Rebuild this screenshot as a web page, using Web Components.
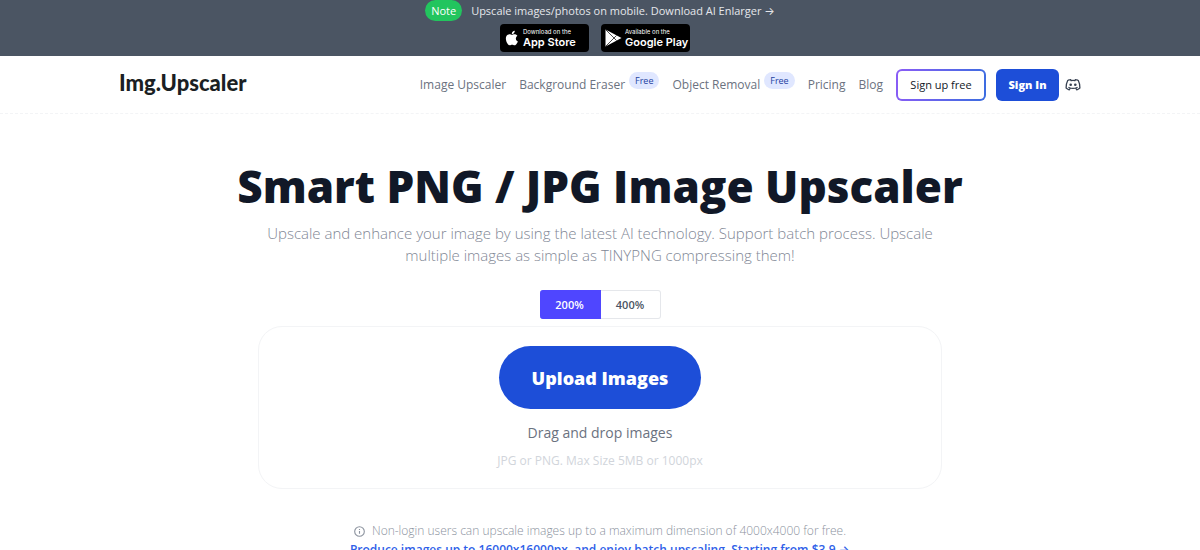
<!DOCTYPE html>
<html lang="en">
<head>
<meta charset="utf-8">
<meta name="viewport" content="width=device-width, initial-scale=1">
<title>Img.Upscaler</title>
<style>
  html { background: #fff; }
  body { margin: 0; font-family: "Open Sans", Inter, "Noto Sans", sans-serif; color: #6b7280; font-size: 12px; line-height: 20px; }
</style>
</head>
<body>
<upscaler-page></upscaler-page>
<script>
function define(name, html) {
  const template = document.createElement('template');
  template.innerHTML = '<style>*{box-sizing:border-box}a{color:inherit;text-decoration:none}button{font:inherit;border:0;margin:0;padding:0;cursor:pointer}</style>' + html;
  customElements.define(name, class extends HTMLElement {
    constructor() {
      super();
      this.attachShadow({ mode: 'open' }).append(template.content.cloneNode(true));
    }
  });
}

define('store-badge', `
<style>
  :host { display: block; }
  a { display: flex; align-items: center; gap: 3px; width: 89px; height: 28px; padding: 0 4px; border-radius: 4px; background: #000; color: #fff; font-family: Inter, sans-serif; white-space: nowrap; }
  .lines { display: flex; flex-direction: column; }
  .small { font-size: 6px; line-height: 8px; }
  .big { font-size: 11px; line-height: 12px; font-weight: 600; }
</style>
<a href="#"><slot name="icon"></slot><span class="lines"><span class="small"><slot name="small"></slot></span><span class="big"><slot></slot></span></span></a>`);

define('promo-bar', `
<style>
  :host { display: flex; flex-direction: column; align-items: center; gap: 3px; height: 56px; background: #4b5563; color: #e5e7eb; }
  .row { display: flex; align-items: center; gap: 9px; font-size: 11px; line-height: 21px; }
  .note { padding: 0 6px; border-radius: 12px; background: #22c55e; color: #fff; }
  .stores { display: flex; gap: 12px; padding-right: 10px; }
  svg { display: block; flex: none; }
</style>
<div class="row"><span class="note">Note</span><a href="#">Upscale images/photos on mobile. Download AI Enlarger →</a></div>
<div class="stores">
  <store-badge>
    <svg slot="icon" width="16" height="18" viewBox="2 0 20 24" fill="#fff"><path d="M17.1 12.7c0-2.5 2-3.7 2.100-3.800-1.200-1.700-3-1.900-3.600-2-1.500-.1-3 .9-3.700.9-.8 0-2-.9-3.200-.9-1.700 0-3.200 1-4.100 2.400-1.700 3-.4 7.500 1.300 10 .8 1.200 1.800 2.500 3.100 2.500 1.300-.1 1.700-.8 3.200-.8s1.900.8 3.200.8c1.300 0 2.200-1.200 3-2.400 1-1.400 1.300-2.700 1.400-2.800-.1 0-2.700-1-2.700-3.900zM14.700 5.400c.7-.8 1.100-1.900 1-3.100-1 .1-2.200.7-2.900 1.500-.6.700-1.200 1.900-1 3 1.100.1 2.200-.6 2.900-1.400z"/></svg>
    <span slot="small">Download on the</span>App Store
  </store-badge>
  <store-badge>
    <svg slot="icon" width="17" height="18" viewBox="0 0 17 18"><path d="M.5.5v17l16-8.500z" fill="#fff"/><path d="M1 1l10.500 10.500M1 17L11.500 6.500" stroke="#000" stroke-width=".7"/></svg>
    <span slot="small">Available on the</span>Google Play
  </store-badge>
</div>`);

define('nav-link', `
<style>
  :host { display: flex; align-items: center; gap: 4px; white-space: nowrap; }
  ::slotted([slot=tag]) { padding: 0 6px; margin-bottom: 8px; border-radius: 9px; background: #e0e7ff; color: #1e429f; font-size: 9px; line-height: 17px; }
</style>
<a href="#"><slot></slot></a><slot name="tag"></slot>`);

define('site-header', `
<style>
  :host { display: block; border-bottom: 1px dashed #f3f4f6; }
  header { display: flex; align-items: center; justify-content: space-between; max-width: 962px; height: 57px; margin: 0 auto; }
  .logo { font: 900 22px/24px Lato, sans-serif; color: #1b1f24; padding-bottom: 4px; }
  nav { display: flex; align-items: center; gap: 13px; }
  .buttons { display: flex; align-items: center; gap: 10px; }
  button { height: 32px; border-radius: 6px; font-size: 11px; white-space: nowrap; }
  .up { width: 90px; border: 2px solid transparent; background: linear-gradient(#fff, #fff) padding-box, linear-gradient(100deg, #8b5cf6, #3b6de0) border-box; color: #111827; font-weight: 500; }
  .in { width: 63px; background: #1d4ed8; color: #fff; font-weight: 800; }
  .discord { margin-left: -4px; }
  svg { display: block; }
</style>
<header>
  <a class="logo" href="#">Img.Upscaler</a>
  <nav>
    <nav-link>Image Upscaler</nav-link>
    <nav-link>Background Eraser<span slot="tag">Free</span></nav-link>
    <nav-link>Object Removal<span slot="tag">Free</span></nav-link>
    <nav-link>Pricing</nav-link>
    <nav-link>Blog</nav-link>
    <div class="buttons"><button class="up">Sign up free</button><button class="in">Sign In</button>
    <a class="discord" href="#" aria-label="Discord"><svg width="16" height="14" viewBox="0 0 16 14" fill="none" stroke="#374151" stroke-width="1.300" stroke-linecap="round" stroke-linejoin="round"><path d="M5.600 1.600C4.500 1.700 3.500 2 2.700 2.500 1.500 4.800 1 7.200 1.100 10.100c.9.800 1.900 1.300 3.100 1.700l1-1.600M10.400 1.600c1.100.1 2.100.4 2.900.9 1.200 2.300 1.700 4.700 1.600 7.600-.9.800-1.900 1.300-3.100 1.700l-1-1.600M5.600 1.600l.5 1c1.300-.2 2.500-.2 3.800 0l.5-1M3.900 9.500c2.700 1.200 5.500 1.200 8.200 0"/><g fill="#374151" stroke="none"><circle cx="5.700" cy="6.700" r="1.300"/><circle cx="10.300" cy="6.700" r="1.300"/></g></svg></a></div>
  </nav>
</header>`);

define('scale-switch', `
<style>
  :host { display: flex; }
  button { height: 29px; font-size: 11px; font-weight: 600; background: #fff; color: #4b5563; border: 1px solid #e5e7eb; width: 60px; border-left: 0; border-radius: 0 3px 3px 0; }
  .on { width: 61px; background: #4f46ff; color: #fff; border-color: #4f46ff; border-radius: 3px 0 0 3px; }
</style>
<button class="on">200%</button><button>400%</button>`);

define('upload-card', `
<style>
  :host { display: flex; flex-direction: column; align-items: center; width: 100%; max-width: 684px; padding: 19px 0 17px; border: 1px solid #f3f4f6; border-radius: 24px; box-sizing: border-box; }
  button { height: 63px; padding: 0 33px; border-radius: 32px; background: #1d4ed8; color: #fff; font-size: 18px; font-weight: 800; }
  .drop { margin-top: 14px; font-size: 14px; }
  .hint { margin-top: 8px; color: #d1d5db; }
</style>
<button>Upload Images</button>
<div class="drop">Drag and drop images</div>
<div class="hint">JPG or PNG. Max Size 5MB or 1000px</div>`);

define('upscaler-hero', `
<style>
  :host { display: flex; flex-direction: column; align-items: center; padding: 48px 16px 0; text-align: center; }
  h1 { margin: 0; font-size: 44px; line-height: 48px; font-weight: 800; color: #111827; }
  p { margin: 12px 0 24px; max-width: 684px; font-size: 15px; line-height: 22px; font-weight: 300; color: #7f8795; }
  upload-card { margin-top: 7px; }
  .limit { display: flex; align-items: center; gap: 7px; margin-top: 32px; font-weight: 300; color: #8b929e; }
  .offer { margin-top: -1px; font-weight: 600; color: #2f5fe8; }
</style>
<h1>Smart PNG / JPG Image Upscaler</h1>
<p>Upscale and enhance your image by using the latest AI technology. Support batch process. Upscale multiple images as simple as TINYPNG compressing them!</p>
<scale-switch></scale-switch>
<upload-card></upload-card>
<div class="limit"><svg width="11" height="11" viewBox="0 0 24 24" fill="none" stroke="#8b929e" stroke-width="2.400"><circle cx="12" cy="12" r="10.500"/><path d="M12 17v-6M12 8.800V6.400"/></svg><span>Non-login users can upscale images up to a maximum dimension of 4000x4000 for free.</span></div>
<a class="offer" href="#">Produce images up to 16000x16000px, and enjoy batch upscaling. Starting from $3.9 →</a>`);

define('upscaler-page', `
<style>:host { display: block; }</style>
<promo-bar></promo-bar><site-header></site-header><main><upscaler-hero></upscaler-hero></main>`);
</script>
</body>
</html>
